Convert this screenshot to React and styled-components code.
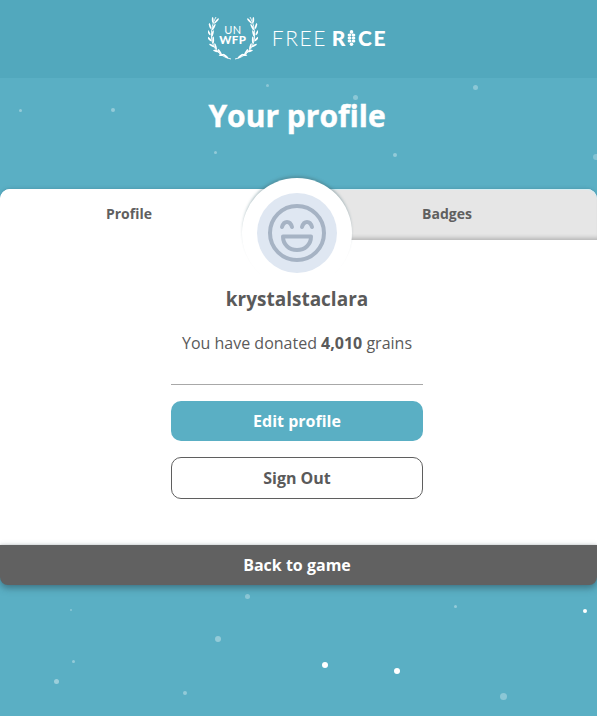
import React from "react";
import styled, { createGlobalStyle } from "styled-components";

const Global = createGlobalStyle`
  html, body { margin: 0; padding: 0; background: #5aafc4; }
  * { box-sizing: border-box; }
  body { font-family: "Open Sans", "Liberation Sans", sans-serif; }
`;

const Page = styled.div`
  position: relative;
  width: 597px;
  height: 716px;
  overflow: hidden;
  background: #5aafc4;
`;

const Dot = styled.span`
  position: absolute;
  border-radius: 50%;
  background: #fff;
`;

const Header = styled.header`
  position: relative;
  height: 78px;
  background: #52a8bd;
  display: flex;
  justify-content: center;
  align-items: center;
  gap: 14px;
  padding: 0 2px 2px 0;
`;

const Logo = styled.div`
  position: relative;
  width: 50px;
  height: 44px;
`;

const LogoText = styled.div`
  position: absolute;
  left: 0;
  right: 0;
  top: ${(p) => p.$top}px;
  height: 9px;
  display: flex;
  align-items: center;
  justify-content: center;
  color: #fff;
  font-family: "Lato", sans-serif;
  font-size: ${(p) => p.$size}px;
  font-weight: ${(p) => p.$weight};
  letter-spacing: 0.4px;
  line-height: 9px;
`;

const Wordmark = styled.div`
  display: flex;
  align-items: center;
  color: #fff;
  font-family: "Lato", sans-serif;
  font-size: 21px;
  line-height: 24px;
`;

const Light = styled.span`
  font-weight: 300;
  letter-spacing: 1.5px;
  margin-right: 5px;
`;

const Heavy = styled.span`
  font-weight: 900;
  letter-spacing: 1.6px;
`;

const Title = styled.h1`
  position: relative;
  margin: 0;
  height: 111px;
  padding: 15px 3px 0 0;
  text-align: center;
  color: #fff;
  font-size: 30px;
  font-weight: 700;
  line-height: 46px;
  -webkit-text-stroke: 0.4px #fff;
`;

const Card = styled.section`
  position: relative;
  background: #fff;
  border-radius: 10px 10px 0 0;
  height: 356px;
  box-shadow: 0 -1px 3px rgba(60, 120, 140, 0.35);
`;

const Tabs = styled.div`
  display: grid;
  grid-template-columns: 297px 300px;
  height: 51px;
`;

const Tab = styled.div`
  display: flex;
  align-items: center;
  justify-content: center;
  padding: 0 ${(p) => (p.$active ? "39px" : "0")} 2px 0;
  font-size: 14px;
  font-weight: 700;
  color: #5f5f5f;
  border-radius: ${(p) => (p.$active ? "10px 0 0 0" : "0 10px 0 0")};
  background: ${(p) => (p.$active ? "#fff" : "#e6e6e6")};
  box-shadow: ${(p) =>
    p.$active ? "none" : "inset 0 -5px 4px -3px rgba(0,0,0,0.22), inset 0 1px 0 #d6eef3"};
`;

const AvatarRing = styled.div`
  position: absolute;
  left: 242px;
  top: -11px;
  width: 110px;
  height: 110px;
  border-radius: 50%;
  background: #fff;
  display: flex;
  align-items: center;
  justify-content: center;
  box-shadow: 0 -3px 3px -1px rgba(70, 110, 120, 0.45);
`;

const AvatarFace = styled.div`
  width: 80px;
  height: 80px;
  border-radius: 50%;
  background: #dfe7f2;
  display: flex;
  align-items: center;
  justify-content: center;
`;

const Content = styled.div`
  display: flex;
  flex-direction: column;
  align-items: center;
  padding-right: 3px;
`;

const Username = styled.h2`
  margin: 46px 0 0;
  font-size: 19px;
  line-height: 26px;
  font-weight: 700;
  color: #5a5a5a;
`;

const Donated = styled.p`
  margin: 18px 0 0;
  font-size: 16px;
  line-height: 26px;
  color: #5a5a5a;
  b { font-weight: 700; }
`;

const Divider = styled.hr`
  width: 252px;
  height: 1px;
  margin: 28px 0 16px;
  border: 0;
  background: #a8a8a8;
`;

const Button = styled.div`
  width: 252px;
  height: ${(p) => (p.$outline ? "42px" : "40px")};
  margin-bottom: 16px;
  display: flex;
  align-items: center;
  justify-content: center;
  border-radius: 10px;
  font-size: 16px;
  font-weight: 700;
  color: ${(p) => (p.$outline ? "#5a5a5a" : "#fff")};
  background: ${(p) => (p.$outline ? "#fff" : "#5aafc4")};
  border: ${(p) => (p.$outline ? "1px solid #5f5f5f" : "0")};
`;

const BackBar = styled.div`
  position: relative;
  height: 40px;
  padding-right: 3px;
  display: flex;
  align-items: center;
  justify-content: center;
  background: #616161;
  color: #fff;
  font-size: 16px;
  font-weight: 700;
  border-radius: 0 0 8px 8px;
  box-shadow: 0 3px 7px rgba(40, 70, 80, 0.55), 0 -1px 2px rgba(0, 0, 0, 0.08);
`;

const dots = [
  [20, 110, 3, 0.35], [113, 110, 4, 0.35], [267, 85, 3, 0.3], [355, 97, 5, 0.3], [475, 87, 5, 0.3],
  [215, 152, 3, 0.35], [395, 155, 4, 0.35], [596, 157, 6, 0.25],
  [247, 596, 5, 0.3], [71, 610, 2, 0.3], [455, 606, 3, 0.35], [585, 611, 4, 1],
  [218, 639, 6, 0.35], [73, 661, 3, 0.35], [325, 665, 6, 1], [397, 671, 6, 1],
  [56, 681, 5, 0.4], [185, 693, 4, 0.35], [503, 696, 7, 0.3],
];

const wreathLeaves = [
  [5.5, 4, 20], [2.8, 10, 5], [1.6, 16.5, -8], [2.2, 23, -22], [4.6, 29.5, -38], [8.8, 35, -55], [14.5, 39, -72],
];

const WreathSide = () => (
  <>
    <path d="M23 43C12 41 4.5 32 3.5 22C3 14 4.5 7 8 1" stroke="#fff" strokeWidth="0.9" fill="none" />
    {wreathLeaves.map(([x, y, r]) => (
      <g key={y}>
        <ellipse cx={x + 3} cy={y + 1} rx="0.9" ry="3.4" fill="#fff" transform={`rotate(${r + 22} ${x + 3} ${y + 1})`} />
        <ellipse cx={x - 0.8} cy={y} rx="0.9" ry="3" fill="#fff" transform={`rotate(${r - 22} ${x - 0.8} ${y})`} />
      </g>
    ))}
  </>
);

const Wreath = () => (
  <svg width="50" height="44" viewBox="0 0 50 44" fill="none">
    <WreathSide />
    <g transform="translate(50 0) scale(-1 1)">
      <WreathSide />
    </g>
  </svg>
);

const RiceGrain = () => (
  <svg width="9" height="16" viewBox="0 0 9 16" style={{ marginRight: 2 }} fill="#fff">
    <ellipse cx="4.5" cy="1.9" rx="1.8" ry="1.9" />
    {[5, 8, 11].map((y) => (
      <g key={y}>
        <ellipse cx="2.5" cy={y} rx="1.9" ry="1.6" />
        <ellipse cx="6.5" cy={y} rx="1.9" ry="1.6" />
      </g>
    ))}
    <ellipse cx="4.5" cy="14.2" rx="1.8" ry="1.8" />
  </svg>
);

const Smile = () => (
  <svg width="60" height="60" viewBox="0 0 60 60" fill="none" stroke="#a6b3c4" strokeWidth="4" strokeLinecap="round">
    <circle cx="30" cy="30" r="27" />
    <path d="M15 24c1-3.4 3-5 5-5s4 1.6 5 5" />
    <path d="M35 24c1-3.4 3-5 5-5s4 1.6 5 5" />
    <path d="M16 33.5h28c0 8-6 13.5-14 13.5s-14-5.5-14-13.500z" strokeLinejoin="round" />
  </svg>
);

export default function App() {
  return (
    <Page>
      <Global />
      {dots.map(([x, y, s, o], i) => (
        <Dot
          key={i}
          style={{ left: x - s / 2, top: y - s / 2, width: s, height: s, opacity: o }}
        />
      ))}
      <Header>
        <Logo>
          <Wreath />
          <LogoText $top={9} $size={11} $weight={400}>UN</LogoText>
          <LogoText $top={19} $size={11.5} $weight={900}>WFP</LogoText>
        </Logo>
        <Wordmark>
          <Light>FREE</Light>
          <Heavy>R</Heavy>
          <RiceGrain />
          <Heavy>CE</Heavy>
        </Wordmark>
      </Header>
      <Title>Your profile</Title>
      <Card>
        <Tabs>
          <Tab $active>Profile</Tab>
          <Tab>Badges</Tab>
        </Tabs>
        <AvatarRing>
          <AvatarFace>
            <Smile />
          </AvatarFace>
        </AvatarRing>
        <Content>
          <Username>krystalstaclara</Username>
          <Donated>
            You have donated <b>4,010</b> grains
          </Donated>
          <Divider />
          <Button>Edit profile</Button>
          <Button $outline>Sign Out</Button>
        </Content>
      </Card>
      <BackBar>Back to game</BackBar>
    </Page>
  );
}
